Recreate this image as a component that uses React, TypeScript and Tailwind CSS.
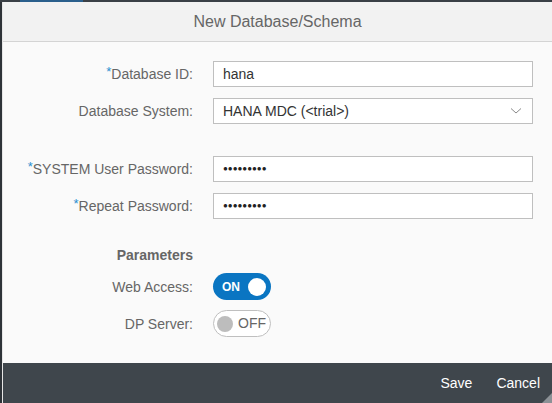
import React from "react";

const Label = ({ text, req }: { text: string; req?: boolean }) => (
  <div className="w-[190px] shrink-0 text-right text-[14px] text-[#666666] leading-none">
    {req && <span className="text-[#2b8fd0] text-[13px] relative top-[-3px]">*</span>}
    {text}
  </div>
);

const Row = ({ children, className = "" }: { children: React.ReactNode; className?: string }) => (
  <div className={"flex items-center gap-[20px] " + className}>{children}</div>
);

export default function App() {
  return (
    <div
      className="w-[552px] h-[403px] bg-[#2e3338] flex flex-col overflow-hidden"
      style={{ fontFamily: '"Liberation Sans", Arial, sans-serif' }}
    >
      <div className="flex h-[2px] shrink-0">
        <div className="w-[20px] bg-[#3a4046]" />
        <div className="w-[63px] bg-[#2a5f8c]" />
        <div className="flex-1 bg-[#3a4046]" />
      </div>
      <div className="flex-1 ml-[2px] flex flex-col relative bg-[#fafafa] border-l border-[#e6e6e6]">
        <div className="h-[40px] shrink-0 bg-[#f2f2f2] border-b border-[#d4d4d4] flex items-center justify-center text-[16px] text-[#666666]">
          New Database/Schema
        </div>
        <div className="flex-1 flex flex-col pt-[19px]">
          <Row>
            <Label text="Database ID:" req />
            <div className="w-[320px] h-[26px] border border-[#bfbfbf] bg-white flex items-center px-[9px] text-[14px] text-[#333]">
              hana
            </div>
          </Row>
          <Row className="mt-[11px]">
            <Label text="Database System:" />
            <div className="w-[320px] h-[26px] border border-[#bfbfbf] bg-white flex items-center justify-between px-[9px] text-[14px] text-[#333]">
              <span>HANA MDC (&lt;trial&gt;)</span>
              <svg width="12" height="8" viewBox="0 0 12 8" className="mr-[1px]">
                <path d="M1 1.5 L6 6 L11 1.5" fill="none" stroke="#8a8a8a" strokeWidth="1" />
              </svg>
            </div>
          </Row>
          <Row className="mt-[32px]">
            <Label text="SYSTEM User Password:" req />
            <div className="w-[320px] h-[26px] border border-[#bfbfbf] bg-white flex items-center px-[9px] text-[8px] text-[#222]">
              ●●●●●●●●●
            </div>
          </Row>
          <Row className="mt-[11px]">
            <Label text="Repeat Password:" req />
            <div className="w-[320px] h-[26px] border border-[#bfbfbf] bg-white flex items-center px-[9px] text-[8px] text-[#222]">
              ●●●●●●●●●
            </div>
          </Row>
          <Row className="mt-[26px]">
            <div className="w-[190px] shrink-0 text-right text-[14px] font-bold text-[#666666]">Parameters</div>
          </Row>
          <Row className="mt-[7px]">
            <Label text="Web Access:" />
            <div className="w-[58px] h-[27px] rounded-full bg-[#0a75c2] flex items-center justify-between pl-[9px] pr-[5px]">
              <span className="text-white text-[12px] font-bold">ON</span>
              <span className="w-[18px] h-[18px] rounded-full bg-white" />
            </div>
          </Row>
          <Row className="mt-[10px]">
            <Label text="DP Server:" />
            <div className="w-[58px] h-[27px] rounded-full bg-white border border-[#bfbfbf] flex items-center justify-between pl-[3px] pr-[4px]">
              <span className="w-[16px] h-[16px] rounded-full bg-[#bdbdbd]" />
              <span className="text-[#666] text-[14px]">OFF</span>
            </div>
          </Row>
        </div>
        <div className="h-[40px] shrink-0 bg-[#3f464c] flex items-center justify-end gap-[24px] pr-[12px] text-white text-[14px] relative">
          <span>Save</span>
          <span>Cancel</span>
          <svg width="10" height="10" viewBox="0 0 10 10" className="absolute right-0 bottom-0">
            <path d="M10 0 L10 10 L0 10 Z" fill="#8c9196" />
          </svg>
        </div>
      </div>
    </div>
  );
}
